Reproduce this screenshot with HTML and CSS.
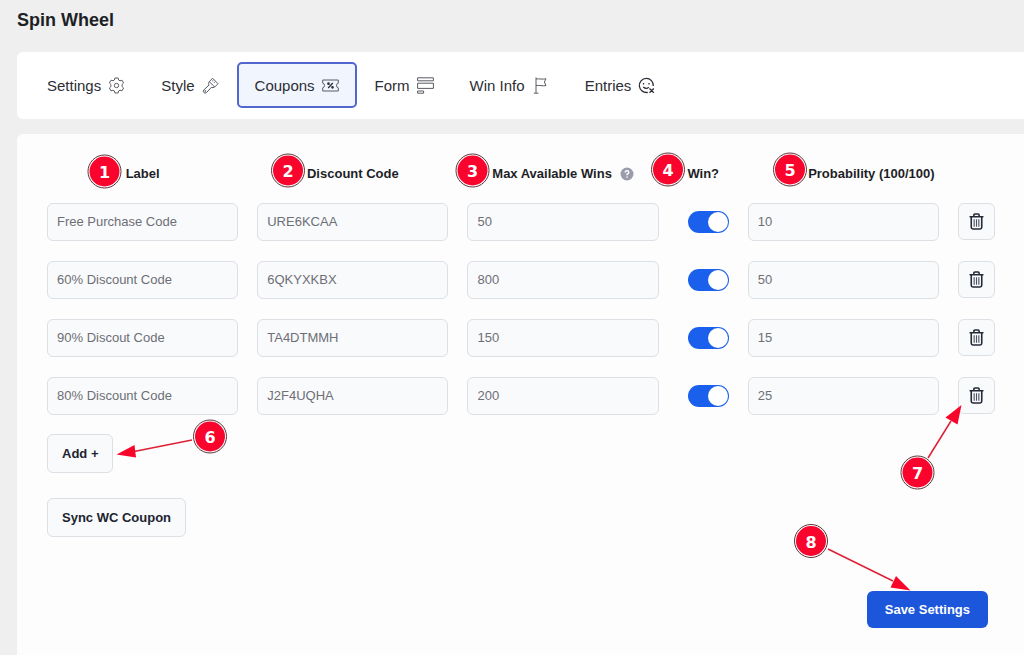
FILE: index.html
```html
<!DOCTYPE html>
<html lang="en">
<head>
<meta charset="utf-8">
<meta name="viewport" content="width=device-width, initial-scale=1">
<title>Spin Wheel</title>
<link rel="stylesheet" href="styles.css">
</head>
<body>
<svg class="sprite" aria-hidden="true">
  <symbol id="trash" viewBox="0 0 16 18">
    <path d="M1.200 4h13.600M5.200 3.600V2.200Q5.200 1 6.400 1h3.200q1.200 0 1.200 1.200v1.400M2.400 4.200v11q0 1.800 1.800 1.800h7.600q1.800 0 1.800-1.800v-11" fill="none" stroke="#252a38" stroke-width="1.700" stroke-linecap="round"/>
    <path d="M5.500 6.500v8M8 6.500v8M10.500 6.500v8" fill="none" stroke="#4d5160" stroke-width="1.200"/>
  </symbol>
</svg>
<h1 class="page-title">Spin Wheel</h1>
<nav class="tabs">
  <button class="tab" type="button">Settings
    <svg class="icon" viewBox="0 0 17 17"><path d="M6.900 1h3.200l.5 2 1.400.8 2-.6 1.600 2.800-1.500 1.400v2.200l1.500 1.400-1.600 2.800-2-.6-1.400.8-.5 2H6.900l-.5-2-1.400-.8-2 .6L1.400 11l1.500-1.400V7.400L1.400 6 3 3.200l2 .6L6.400 3z"/><circle cx="8.500" cy="8.500" r="2.200"/></svg>
  </button>
  <button class="tab" type="button">Style
    <svg class="icon" viewBox="0 0 17 17"><path d="M10.500 1.200 16 6.700l-3.400 3.400q-1.600 1-3.200.2l-5 5.400q-1.500 1-2.600-.2-1.200-1.300 0-2.600l5.200-4.800q-.9-1.700.2-3.300zM7.400 4.700l5.300 5.300M10.200 4.200l1.400-1.400M12 5.800l1.200-1.200"/><circle cx="3.300" cy="14" r=".5"/></svg>
  </button>
  <button class="tab tab-active" type="button" aria-current="page">Coupons
    <svg class="icon" viewBox="0 0 17 17"><path d="M.7 3h15.600v3.200q-1.800.4-1.800 2.300t1.800 2.300V14H.7v-3.200q1.800-.4 1.800-2.300T.7 6.200z"/><path class="dark" d="M6.200 11l4.600-5"/><circle class="dark" cx="6.500" cy="6.700" r=".7"/><circle class="dark" cx="10.500" cy="10.300" r=".7"/></svg>
  </button>
  <button class="tab" type="button">Form
    <svg class="icon" viewBox="0 0 17 17"><path d="M.6.8h15.800v3H.6zM.6 6.200h15.800v5.200H.6zM.6 14h6v2.200h-6z"/></svg>
  </button>
  <button class="tab" type="button">Win Info
    <svg class="icon" viewBox="0 0 17 17"><path d="M4 .5v15.500M1.800 16.200h4.600M4 2q2.500-.3 5 0t5-.2l-1.600 3.200L14 8.600q-2.500.4-5 0t-5 0"/></svg>
  </button>
  <button class="tab" type="button">Entries
    <svg class="icon" viewBox="0 0 17 17"><path class="dark" d="M15.300 9A7 7 0 1 0 9.800 15.300"/><path class="dark" d="M5.500 6v1.500M11 6v1.500M5.200 10q3 2.500 5.600.3M11.500 11.500l4.300 4.300M15.800 11.500l-4.300 4.300"/></svg>
  </button>
</nav>

<main class="panel">
  <table class="coupons">
    <colgroup><col><col><col><col class="col-win"><col><col class="col-delete"></colgroup>
    <thead>
      <tr>
        <th scope="col">Label</th>
        <th scope="col">Discount Code</th>
        <th scope="col"><span class="with-help">Max Available Wins
          <svg class="help" viewBox="0 0 14 14" role="img" aria-label="Help"><circle cx="7" cy="7" r="6.500" fill="#9a9cab"/><path d="M5.200 5.600q0-1.800 1.800-1.800t1.800 1.600Q8.800 6.500 7 7.200V8.300M7 9.400v1.300" fill="none" stroke="#fff" stroke-width="1.400"/></svg></span></th>
        <th scope="col">Win?</th>
        <th scope="col" colspan="2">Probability (100/100)</th>
      </tr>
    </thead>
    <tbody>
      <tr>
        <td><input class="field" aria-label="Label" value="Free Purchase Code"></td>
        <td><input class="field" aria-label="Discount code" value="URE6KCAA"></td>
        <td><input class="field" aria-label="Max available wins" value="50"></td>
        <td><input class="switch" type="checkbox" aria-label="Win" checked></td>
        <td><input class="field" aria-label="Probability" value="10"></td>
        <td><button class="delete" type="button" aria-label="Delete"><svg><use href="#trash"/></svg></button></td>
      </tr>
      <tr>
        <td><input class="field" aria-label="Label" value="60% Discount Code"></td>
        <td><input class="field" aria-label="Discount code" value="6QKYXKBX"></td>
        <td><input class="field" aria-label="Max available wins" value="800"></td>
        <td><input class="switch" type="checkbox" aria-label="Win" checked></td>
        <td><input class="field" aria-label="Probability" value="50"></td>
        <td><button class="delete" type="button" aria-label="Delete"><svg><use href="#trash"/></svg></button></td>
      </tr>
      <tr>
        <td><input class="field" aria-label="Label" value="90% Discout Code"></td>
        <td><input class="field" aria-label="Discount code" value="TA4DTMMH"></td>
        <td><input class="field" aria-label="Max available wins" value="150"></td>
        <td><input class="switch" type="checkbox" aria-label="Win" checked></td>
        <td><input class="field" aria-label="Probability" value="15"></td>
        <td><button class="delete" type="button" aria-label="Delete"><svg><use href="#trash"/></svg></button></td>
      </tr>
      <tr>
        <td><input class="field" aria-label="Label" value="80% Discount Code"></td>
        <td><input class="field" aria-label="Discount code" value="J2F4UQHA"></td>
        <td><input class="field" aria-label="Max available wins" value="200"></td>
        <td><input class="switch" type="checkbox" aria-label="Win" checked></td>
        <td><input class="field" aria-label="Probability" value="25"></td>
        <td><button class="delete" type="button" aria-label="Delete"><svg><use href="#trash"/></svg></button></td>
      </tr>
    </tbody>
  </table>
  <div class="actions">
    <button class="btn" type="button">Add +</button>
    <button class="btn" type="button">Sync WC Coupon</button>
  </div>
  <div class="footer">
    <button class="btn-save" type="button">Save Settings</button>
  </div>
</main>

<svg class="callouts" width="1024" height="655" viewBox="0 0 1024 655">
  <g class="arrow">
    <path d="M192 440 134 451.500M928 458 951 421M828 549 893 581"/>
    <path class="head" d="M116.500 454.500 134.500 445 136 457.500zM961.500 405 957.500 424.500 945.500 417.500zM910.500 590.500 896 576 890.500 587.500z"/>
  </g>
  <g class="badge"><circle class="rim" cx="104.500" cy="171.500" r="16.500"/><circle class="disc" cx="104.500" cy="171.500" r="15"/><text x="104.500" y="178">1</text></g>
  <g class="badge"><circle class="rim" cx="288" cy="170.500" r="16.500"/><circle class="disc" cx="288" cy="170.500" r="15"/><text x="288" y="177">2</text></g>
  <g class="badge"><circle class="rim" cx="472.500" cy="170.500" r="16.500"/><circle class="disc" cx="472.500" cy="170.500" r="15"/><text x="472.500" y="177">3</text></g>
  <g class="badge"><circle class="rim" cx="668" cy="169.500" r="16.500"/><circle class="disc" cx="668" cy="169.500" r="15"/><text x="668" y="176">4</text></g>
  <g class="badge"><circle class="rim" cx="790" cy="169.500" r="16.500"/><circle class="disc" cx="790" cy="169.500" r="15"/><text x="790" y="176">5</text></g>
  <g class="badge"><circle class="rim" cx="210" cy="436.500" r="16.500"/><circle class="disc" cx="210" cy="436.500" r="15"/><text x="210" y="443">6</text></g>
  <g class="badge"><circle class="rim" cx="917.500" cy="472.500" r="16.500"/><circle class="disc" cx="917.500" cy="472.500" r="15"/><text x="917.500" y="479">7</text></g>
  <g class="badge"><circle class="rim" cx="811" cy="541" r="16.500"/><circle class="disc" cx="811" cy="541" r="15"/><text x="811" y="548">8</text></g>
</svg>
</body>
</html>
```

FILE: styles.css
```css
* { box-sizing: border-box; }

body {
  position: relative;
  margin: 0;
  min-height: 100vh;
  padding-left: 17px;
  display: flex;
  flex-direction: column;
  background: #efefef;
  color: #1d1f27;
  font-family: "Liberation Sans", Arial, sans-serif;
  font-size: 13px;
}

button, input { font: inherit; color: inherit; margin: 0; }
button { cursor: pointer; }

.sprite { display: none; }

.page-title {
  margin: 0;
  padding: 8px 0 20px;
  font-size: 18px;
  line-height: 24px;
  font-weight: 700;
}

.tabs {
  display: flex;
  padding: 10px 12px 11px;
  background: #fff;
  border-radius: 6px 0 0 6px;
}

.tab {
  display: flex;
  align-items: center;
  gap: 7px;
  height: 46px;
  padding: 0 16px;
  border: 2px solid transparent;
  border-radius: 5px;
  background: none;
  color: #2c2e35;
  font-size: 15px;
  white-space: nowrap;
}

.tab-active { background: #f1f5fe; border-color: #5266cf; }

.icon {
  width: 17px;
  height: 17px;
  fill: none;
  stroke: #5a5c63;
  stroke-width: 1;
}

.icon .dark { stroke: #2c2e35; stroke-width: 1.300; }

.panel {
  flex: 1;
  margin-top: 15px;
  padding: 11px 29px 27px 30px;
  background: #fdfdfd;
  border-radius: 6px 0 0 0;
}

.coupons {
  width: calc(100% + 38px);
  margin: 0 -19px;
  table-layout: fixed;
  border-collapse: separate;
  border-spacing: 19px;
}

.coupons th, .coupons td { padding: 0; }
.coupons th { height: 19px; font-weight: 700; white-space: nowrap; }
.coupons td { height: 39px; }
.col-win { width: 51px; }
.col-delete { width: 37px; }

.with-help { display: inline-flex; align-items: center; gap: 8px; }
.help { width: 14px; height: 14px; }

.field {
  display: block;
  width: 100%;
  height: 38px;
  padding: 0 9px;
  border: 1px solid #dcdfe3;
  border-radius: 6px;
  background: #f9fafb;
  color: #6d6f76;
}

.switch {
  appearance: none;
  display: block;
  width: 41px;
  height: 22px;
  margin-left: auto;
  padding: 1px;
  border-radius: 11px;
  background: #b9bdc7;
}

.switch::before {
  content: "";
  display: block;
  width: 20px;
  height: 20px;
  border-radius: 50%;
  background: #fff;
}

.switch:checked { background: #1b60ed; }
.switch:checked::before { margin-left: auto; }

.delete {
  display: grid;
  place-items: center;
  width: 37px;
  height: 37px;
  padding: 0;
  border: 1px solid #dcdfe3;
  border-radius: 6px;
  background: #f9fafc;
}

.delete svg { width: 15px; height: 17px; }

.actions {
  display: flex;
  flex-direction: column;
  align-items: flex-start;
  gap: 25px;
}

.btn {
  height: 39px;
  padding: 0 14px;
  border: 1px solid #dcdfe3;
  border-radius: 6px;
  background: #f9fafc;
  color: #20242f;
  font-weight: 700;
}

.footer {
  display: flex;
  justify-content: flex-end;
  padding: 54px 7px 0 0;
}

.btn-save {
  height: 37px;
  padding: 0 18px;
  border: 0;
  border-radius: 6px;
  background: #1b56db;
  color: #fff;
  font-weight: 700;
}

.callouts {
  position: absolute;
  top: 0;
  left: 0;
  pointer-events: none;
}

.arrow { fill: none; stroke: #dd2035; stroke-width: 1.500; }
.arrow .head { fill: #f8052a; stroke: none; }

.badge .rim { fill: #fff; stroke: #5b3338; stroke-width: 1; }
.badge .disc { fill: #f9042c; }
.badge text {
  fill: #fff;
  font-family: "DejaVu Sans", sans-serif;
  font-size: 16px;
  font-weight: 700;
  text-anchor: middle;
}
```
